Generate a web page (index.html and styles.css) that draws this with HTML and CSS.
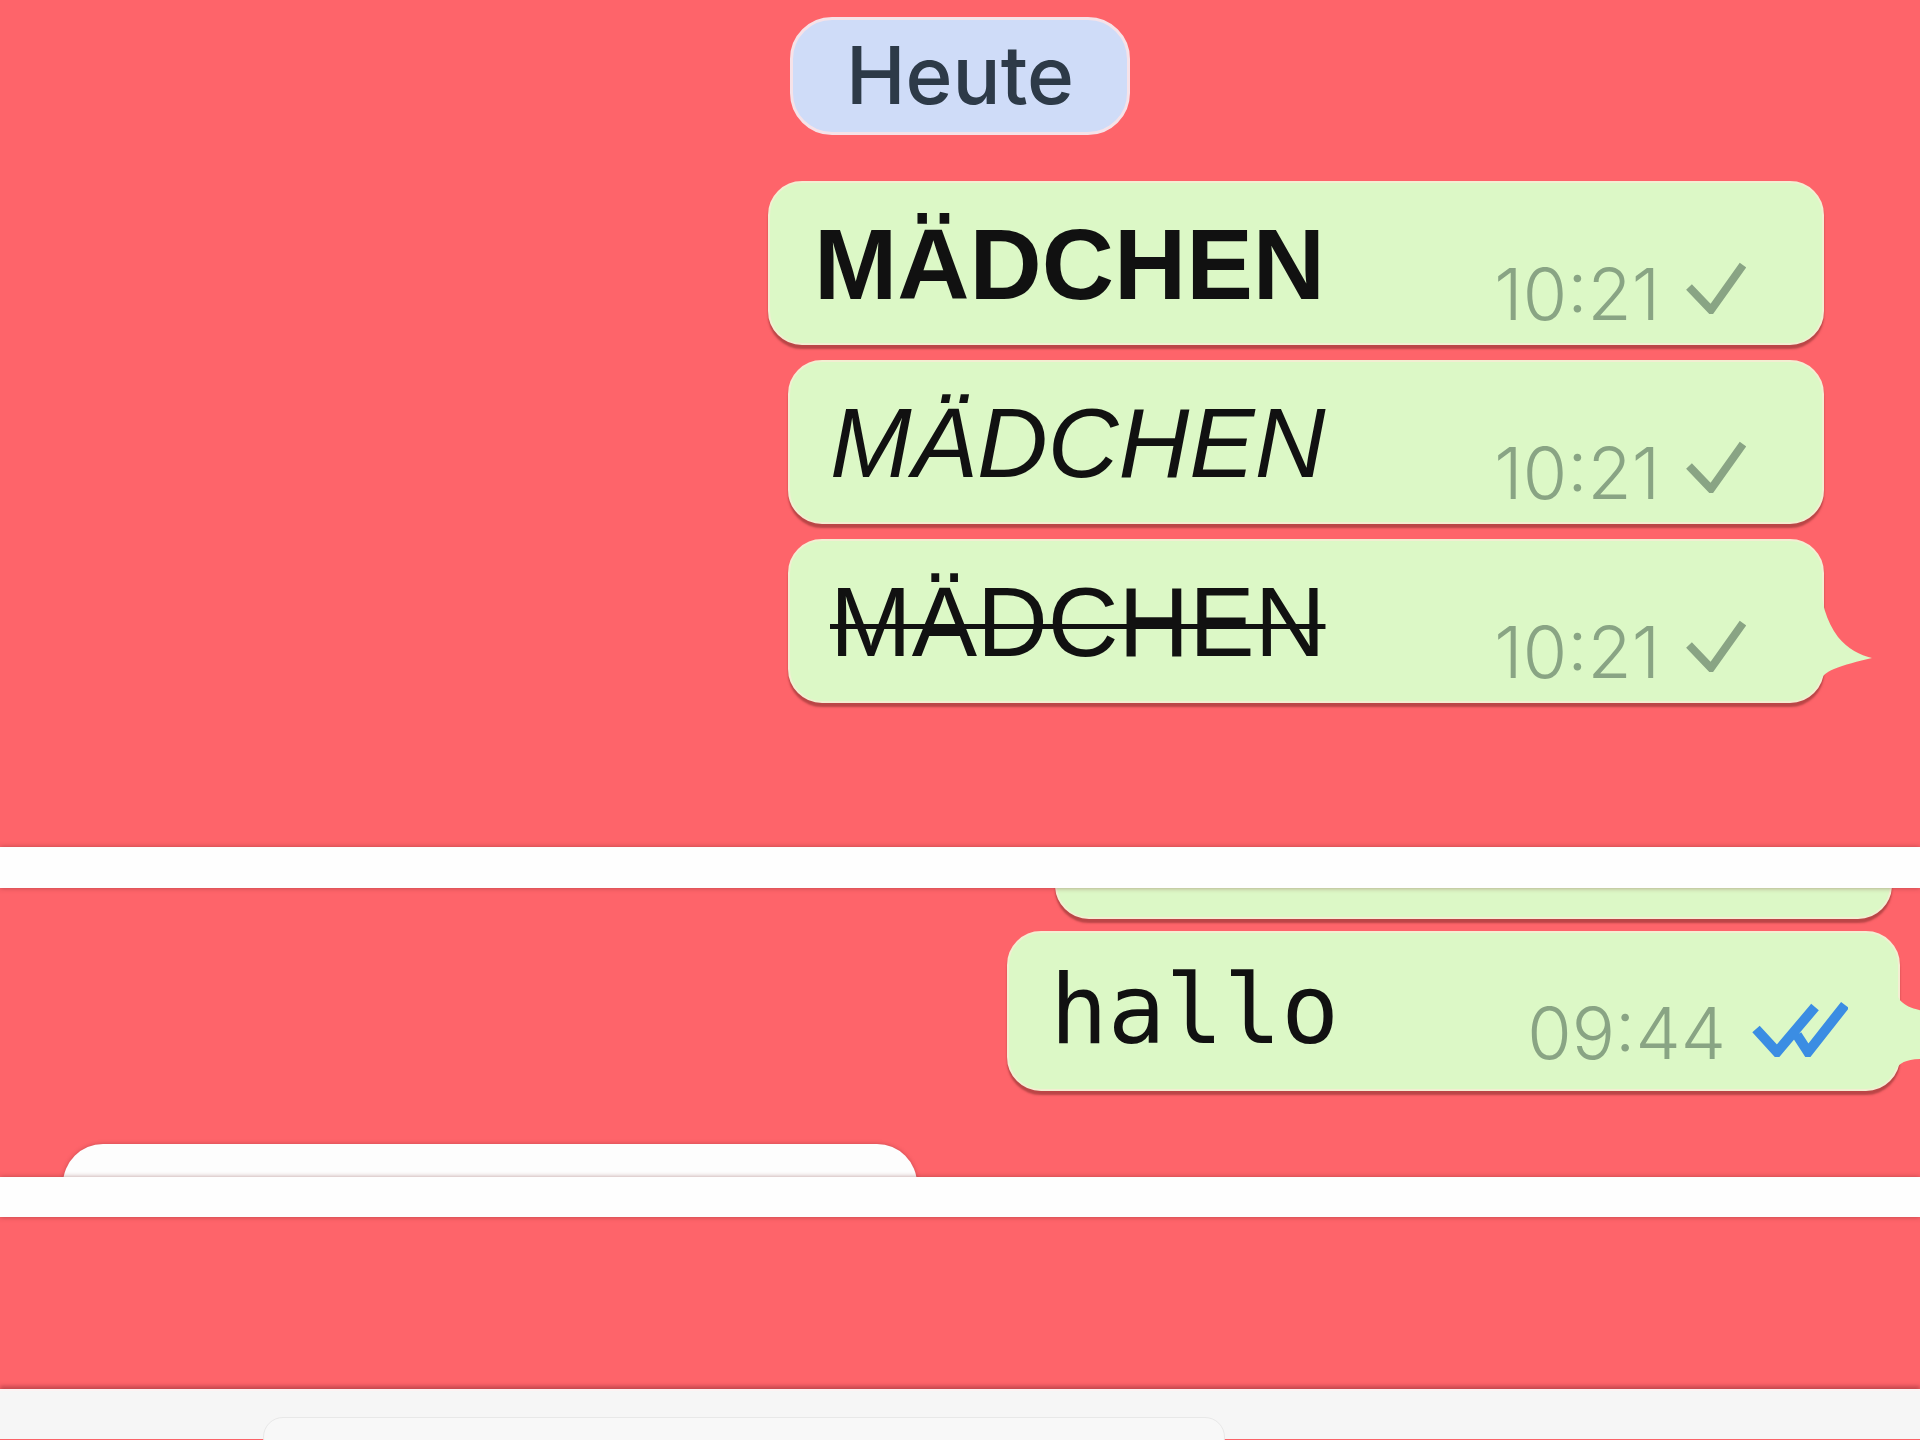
FILE: index.html
```html
<!DOCTYPE html>
<html lang="de">

<head>
    <meta charset="UTF-8">
    <meta name="viewport" content="width=device-width, initial-scale=1.0">
    <title>Chat</title>
    <link rel="stylesheet" href="styles.css">
</head>

<body>
    <div class="chat chat-top">
        <div class="day">Heute</div>

        <div class="bubble wide">
            <span class="text bold">MÄDCHEN</span>
            <span class="meta">10:21
                <svg class="tick" width="60" height="52" viewBox="0 0 60 52"><path d="M3 25 L25 48 L57 3" /></svg>
            </span>
        </div>
        <div class="bubble">
            <span class="text italic">MÄDCHEN</span>
            <span class="meta">10:21
                <svg class="tick" width="60" height="52" viewBox="0 0 60 52"><path d="M3 25 L25 48 L57 3" /></svg>
            </span>
        </div>
        <div class="bubble last">
            <span class="text strike">MÄDCHEN</span>
            <span class="meta">10:21
                <svg class="tick" width="60" height="52" viewBox="0 0 60 52"><path d="M3 25 L25 48 L57 3" /></svg>
            </span>
            <!-- Sprechblasen-Zipfel -->
            <svg class="tail" width="66" height="110" viewBox="0 0 66 110"><path d="M0 0 H12 C13 20 18 40 30 56 C40 68 52 74 64 77 C50 80 36 84 26 88 C18 91 12 96 8 106 L0 106 Z" /></svg>
        </div>
    </div>

    <div class="band"></div>

    <div class="chat chat-mid">
        <div class="bubble cut"></div>
        <div class="bubble hallo">
            <span class="text mono">hallo</span>
            <span class="meta">09:44
                <svg class="ticks" width="96" height="56" viewBox="0 0 96 56"><path d="M4 28 L25 51 L63 6 M45 34 L56 51 L93 4" /></svg>
            </span>
            <svg class="tail-out" width="40" height="80" viewBox="0 0 40 80"><path d="M0 0 H12 C13 10 18 18 40 22 V70 C22 70 16 74 12 80 L0 80 Z" /></svg>
        </div>
        <div class="incoming"></div>
    </div>

    <div class="band band-low"></div>

    <div class="chat chat-empty"></div>

    <div class="composer">
        <div class="field"></div>
    </div>
</body>

</html>
```

FILE: styles.css
```css
* {
    margin: 0;
    padding: 0;
    box-sizing: border-box;
}

body {
    width: 1920px;
    height: 1440px;
    overflow: hidden;
    background-color: #fe646a;
    font-family: "Liberation Sans", Arial, sans-serif;
}

.chat {
    display: flex;
    flex-direction: column;
    background-color: #fe646a;
    overflow: hidden;
}

.chat > * {
    flex-shrink: 0;
}

.chat-top {
    height: 847px;
    align-items: flex-end;
}

.chat-top .bubble {
    margin-right: 96px;
}

.day {
    align-self: center;
    width: 340px;
    height: 118px;
    margin-top: 17px;
    margin-bottom: 46px;
    border: 3px solid #f6e2e8;
    border-radius: 42px;
    background-color: #cfdcf8;
    color: #2d3a48;
    font-family: Inter, "Liberation Sans", sans-serif;
    font-weight: 500;
    font-size: 80px;
    line-height: 110px;
    text-align: center;
}

/* Sprechblasen */
.bubble {
    position: relative;
    display: flex;
    align-items: flex-start;
    width: 1036px;
    height: 164px;
    margin-bottom: 15px;
    padding: 31px 76px 0 40px;
    background-color: #dcf8c6;
    border: 2px solid #f3eed2;
    border-radius: 34px;
    box-shadow: 0 4px 2px rgba(120, 40, 35, .5);
}

.bubble.wide {
    width: 1056px;
    padding-left: 44px;
}

.text {
    color: #111;
    font-size: 98px;
    line-height: 100px;
    white-space: nowrap;
}

.bold {
    font-weight: 700;
    font-size: 100px;
}

.italic {
    font-style: italic;
}

.strike {
    text-decoration: line-through;
    text-decoration-thickness: 5px;
}

.mono {
    font-family: "DejaVu Sans Mono", monospace;
    font-size: 96px;
}

.meta {
    display: flex;
    align-items: flex-start;
    gap: 26px;
    margin-left: auto;
    margin-top: 44px;
    color: #89a484;
    font-family: Inter, "Liberation Sans", sans-serif;
    font-weight: 300;
    font-size: 72px;
    line-height: 72px;
}

.tick {
    margin-top: 4px;
    fill: none;
    stroke: #89a484;
    stroke-width: 8;
}

.ticks {
    margin-top: 4px;
    fill: none;
    stroke: #3b8de3;
    stroke-width: 10;
}

.tail {
    position: absolute;
    top: 40px;
    left: calc(100% - 14px);
    fill: #dcf8c6;
}

/* mittlerer Ausschnitt */
.band {
    position: relative;
    z-index: 2;
    height: 41px;
    background-color: #fefefe;
    box-shadow: 0 0 5px rgba(110, 30, 35, .45);
}

.band-low {
    height: 40px;
}

.chat-mid {
    height: 289px;
    align-items: flex-end;
}

.bubble.cut {
    width: 837px;
    height: 100px;
    margin-top: -69px;
    margin-right: 28px;
    margin-bottom: 12px;
}

.bubble.hallo {
    width: 893px;
    height: 160px;
    margin-right: 20px;
    margin-bottom: 0;
    padding: 27px 50px 0 41px;
}

.hallo .meta {
    margin-top: 37px;
    gap: 26px;
}

.tail-out {
    position: absolute;
    top: 56px;
    left: calc(100% - 14px);
    fill: #dcf8c6;
}

.incoming {
    align-self: flex-start;
    width: 854px;
    height: 100px;
    margin-top: 53px;
    margin-left: 63px;
    background-color: #fdfdfd;
    border-radius: 40px;
    box-shadow: 0 0 4px rgba(110, 30, 35, .35);
}

.chat-empty {
    height: 172px;
}

.composer {
    position: relative;
    z-index: 2;
    height: 50px;
    padding: 26px 0 0 263px;
    background-color: #f6f6f6;
    border-top: 2px solid #fdf3f3;
    box-shadow: 0 -3px 4px rgba(110, 30, 35, .4);
}

.field {
    width: 962px;
    height: 40px;
    background-color: #f8f8f8;
    border: 1px solid #e8e8e8;
    border-radius: 20px;
}
```
